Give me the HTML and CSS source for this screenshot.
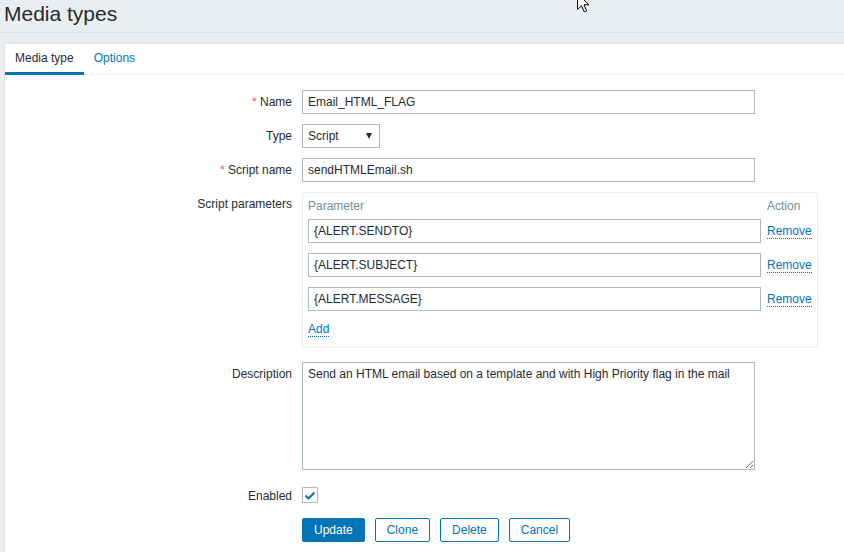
FILE: index.html
```html
<!DOCTYPE html>
<html>
<head>
<meta charset="utf-8">
<link rel="stylesheet" href="styles.css">
</head>
<body>
<header class="page-header">
  <h1 class="page-title">Media types</h1>
</header>
<main class="panel">
  <nav class="tabs">
    <span class="tab tab-active">Media type</span>
    <span class="tab tab-link">Options</span>
  </nav>
  <form class="form">
    <div class="row row-gap10">
      <label class="label"><span class="asterisk">*</span> Name</label>
      <div class="field"><div class="input input-wide">Email_HTML_FLAG</div></div>
    </div>
    <div class="row row-gap10">
      <label class="label">Type</label>
      <div class="field">
        <div class="input select"><span>Script</span><span class="caret"></span></div>
      </div>
    </div>
    <div class="row row-gap10">
      <label class="label"><span class="asterisk">*</span> Script name</label>
      <div class="field"><div class="input input-wide">sendHTMLEmail.sh</div></div>
    </div>
    <div class="row row-params">
      <label class="label">Script parameters</label>
      <div class="field">
        <div class="params">
          <div class="params-head">
            <span class="col-param">Parameter</span>
            <span class="col-action">Action</span>
          </div>
          <div class="params-row">
            <div class="input col-param">{ALERT.SENDTO}</div>
            <a class="link">Remove</a>
          </div>
          <div class="params-row">
            <div class="input col-param">{ALERT.SUBJECT}</div>
            <a class="link">Remove</a>
          </div>
          <div class="params-row">
            <div class="input col-param">{ALERT.MESSAGE}</div>
            <a class="link">Remove</a>
          </div>
          <div class="params-add"><a class="link">Add</a></div>
        </div>
      </div>
    </div>
    <div class="row row-desc">
      <label class="label">Description</label>
      <div class="field">
        <textarea class="textarea">Send an HTML email based on a template and with High Priority flag in the mail</textarea>
      </div>
    </div>
    <div class="row row-enabled">
      <label class="label label-center">Enabled</label>
      <div class="field">
        <span class="checkbox">
          <svg width="16" height="16" viewBox="0 0 16 16"><polyline points="3.5,8.5 6.5,11.5 12.5,5.5" fill="none" stroke="#0275b8" stroke-width="2"/></svg>
        </span>
      </div>
    </div>
    <div class="row">
      <span class="label"></span>
      <div class="field buttons">
        <button type="button" class="btn btn-primary">Update</button>
        <button type="button" class="btn">Clone</button>
        <button type="button" class="btn">Delete</button>
        <button type="button" class="btn">Cancel</button>
      </div>
    </div>
  </form>
</main>
<svg class="cursor" width="13" height="20" viewBox="0 0 13 20">
  <path d="M0.5,0.5 L0.5,16.5 L4.5,12.8 L7.2,18.8 L9.6,17.8 L7,11.8 L12,11.8 Z" fill="#fff" stroke="#000" stroke-width="1" stroke-linejoin="miter"/>
</svg>
</body>
</html>
```

FILE: styles.css
```css
* { box-sizing: border-box; }
html, body { overflow: hidden; }
body {
  margin: 0;
  background: #ebeef0;
  font-family: "Liberation Sans", Arial, sans-serif;
  font-size: 12px;
  line-height: 14px;
  color: #1f2c33;
  position: relative;
  height: 552px;
}
.page-header {
  height: 33px;
  padding: 2px 5px 0 4px;
  border-bottom: 1px solid #dde2e6;
}
.page-title {
  margin: 0;
  font-size: 21px;
  font-weight: normal;
  line-height: 24px;
  color: #1f2c33;
}
.panel {
  margin: 10px 0 0 4px;
  background: #fff;
  border: 1px solid #dfe4e7;
  border-right: none;
  border-bottom: none;
  height: 509px;
}
.tabs {
  display: flex;
  height: 31px;
  border-bottom: 1px solid #ebeef0;
}
.tab {
  padding: 1px 10px 0;
  height: 31px;
  line-height: 27px;
  border-bottom: 3px solid transparent;
}
.tab-active { border-bottom-color: #0275b8; color: #1f2c33; }
.tab-link { color: #0275b8; }
.form { padding-top: 15px; }
.row {
  display: grid;
  grid-template-columns: 287px 1fr;
  column-gap: 10px;
}
.row-gap10 { margin-bottom: 10px; }
.row-params { margin-bottom: 14px; }
.row-desc { margin-bottom: 17px; }
.row-enabled { margin-bottom: 15px; }
.label {
  text-align: right;
  padding-top: 5px;
  line-height: 14px;
}
.label-center { padding-top: 2px; }
.asterisk { color: #e45959; }
.field { display: flex; }
.input {
  height: 24px;
  border: 1px solid #acbbc2;
  padding: 0 5px;
  line-height: 22px;
  background: #fff;
  color: #1f2c33;
  white-space: nowrap;
}
.input-wide { width: 453px; }
.select {
  width: 78px;
  display: flex;
  justify-content: space-between;
  align-items: center;
}
.caret {
  width: 0; height: 0;
  border-left: 3.5px solid transparent;
  border-right: 3.5px solid transparent;
  border-top: 6px solid #1f2c33;
  margin-right: 2px;
}
.params {
  width: 516px;
  border: 1px solid #ebeef0;
  padding: 6px 5px 11px 5px;
}
.params-head {
  display: flex;
  gap: 6px;
  color: #768d99;
  margin-bottom: 6px;
}
.col-param { width: 453px; flex: none; }
.params-row {
  display: flex;
  align-items: center;
  gap: 6px;
  margin-bottom: 10px;
}
.params-add { line-height: 14px; padding-top: 1px; }
.link {
  color: #0275b8;
  text-decoration: none;
  border-bottom: 1px dotted #0275b8;
  cursor: pointer;
}
.textarea {
  width: 453px;
  height: 108px;
  border: 1px solid #acbbc2;
  padding: 4px 5px;
  font: inherit;
  line-height: 14px;
  color: #1f2c33;
  resize: both;
  margin: 0;
  outline: none;
}
.row-enabled .field { align-items: center; }
.checkbox {
  display: block;
  width: 16px;
  height: 16px;
  border: 1px solid #acbbc2;
  position: relative;
}
.checkbox svg { position: absolute; left: -1px; top: -1px; }
.buttons { gap: 10px; }
.btn {
  height: 24px;
  padding: 0 11px;
  border: 1px solid #0275b8;
  border-radius: 2px;
  background: #fff;
  color: #0275b8;
  font: inherit;
  line-height: 22px;
  margin: 0;
}
.btn-primary { background: #0275b8; color: #fff; }
.cursor { position: absolute; left: 577px; top: -7px; }
```
